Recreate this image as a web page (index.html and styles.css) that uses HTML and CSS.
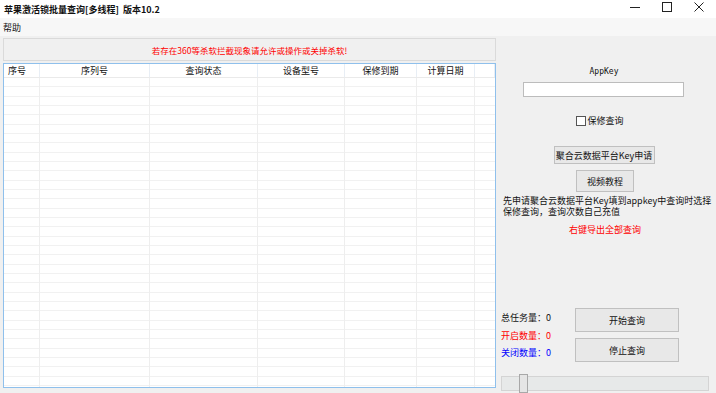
FILE: index.html
```html
<!DOCTYPE html>
<html lang="zh-CN">
<head>
	<meta charset="UTF-8">
	<title>苹果激活锁批量查询</title>
	<link rel="stylesheet" href="styles.css">
</head>
<body>
<div class="window">

	<div class="titlebar">
		<div class="title">苹果激活锁批量查询[多线程]&nbsp;&nbsp;版本10.2</div>
		<div class="controls">
			<span class="ctl"><svg width="10" height="10" viewBox="0 0 10 10"><path d="M0 5.5h10" stroke="#222" stroke-width="1"/></svg></span>
			<span class="ctl"><svg width="10" height="10" viewBox="0 0 10 10"><rect x="0.5" y="0.5" width="9" height="9" fill="none" stroke="#222" stroke-width="1"/></svg></span>
			<span class="ctl"><svg width="10" height="10" viewBox="0 0 10 10"><path d="M0.5 0.5l9 9M9.5 0.5l-9 9" stroke="#222" stroke-width="1"/></svg></span>
		</div>
	</div>

	<div class="menubar"><span class="menu-item">帮助</span></div>

	<div class="main">
		<div class="left">
			<div class="notice">若存在360等杀软拦截现象请允许或操作或关掉杀软!</div>

			<div class="listview">
				<div class="lv-head">
					<div class="lv-col left-text">序号</div>
					<div class="lv-col">序列号</div>
					<div class="lv-col">查询状态</div>
					<div class="lv-col">设备型号</div>
					<div class="lv-col">保修到期</div>
					<div class="lv-col">计算日期</div>
					<div class="lv-col"></div>
				</div>
				<div class="lv-body">
					<div class="lv-line"></div>
					<div class="lv-line"></div>
					<div class="lv-line"></div>
					<div class="lv-line"></div>
					<div class="lv-line"></div>
					<div class="lv-line"></div>
					<div class="lv-line last"></div>
				</div>
			</div>
		</div>

		<div class="right">
			<div class="key-label">AppKey</div>
			<div class="key-input"></div>

			<label class="check"><span class="box"></span>保修查询</label>

			<div class="btn btn-apply">聚合云数据平台Key申请</div>
			<div class="btn btn-video">视频教程</div>

			<p class="hint">先申请聚合云数据平台Key填到appkey中查询时选择<br>保修查询，查询次数自己充值</p>
			<div class="export">右键导出全部查询</div>

			<div class="stats">
				<div class="counts">
					<div class="count">总任务量：0</div>
					<div class="count red">开启数量：0</div>
					<div class="count blue">关闭数量：0</div>
				</div>
				<div class="actions">
					<div class="btn btn-act">开始查询</div>
					<div class="btn btn-act">停止查询</div>
				</div>
			</div>

			<div class="slider"><span class="thumb"></span></div>
		</div>
	</div>

</div>
</body>
</html>
```

FILE: styles.css
```css
html, body {
	margin: 0;
	padding: 0;
}

body {
	width: 716px;
	height: 393px;
	overflow: hidden;
	background: #f0f0f0;
	font-family: "Noto Sans CJK SC", "Liberation Sans", sans-serif;
	font-size: 9px;
	color: #111;
}

.window {
	display: flex;
	flex-direction: column;
	height: 393px;
}

/* title bar */
.titlebar {
	display: flex;
	align-items: center;
	justify-content: space-between;
	height: 18px;
	background: #fff;
}

.title {
	padding-left: 4px;
	font-size: 9px;
	font-weight: bold;
	white-space: nowrap;
}

.controls {
	display: flex;
	padding-right: 1px;
	align-self: flex-start;
	padding-top: 2px;
}

.ctl {
	display: flex;
	justify-content: center;
	align-items: center;
	width: 32px;
	height: 10px;
}

.menubar {
	height: 18px;
	display: flex;
	align-items: center;
	background: #f7f7f7;
}

.menu-item {
	padding-left: 3px;
	padding-top: 1px;
}

/* main area */
.main {
	flex: 1;
	display: flex;
	min-height: 0;
}

.left {
	flex: none;
	width: 493px;
	padding: 2px 0 5px 3px;
	display: flex;
	flex-direction: column;
	gap: 2px;
}

.notice {
	height: 21px;
	border: 1px solid #dadada;
	display: flex;
	justify-content: center;
	align-items: center;
	color: #f00;
	font-size: 8.5px;
	padding-right: 0;
}

.listview {
	flex: 1;
	display: flex;
	flex-direction: column;
	border: 1px solid #8fc0ec;
	background: #fff;
	min-height: 0;
}

.lv-head,
.lv-body {
	display: grid;
	grid-template-columns: 36px 110px 108px 87px 72px 58px 1fr;
}

.lv-head {
	height: 13px;
	border-bottom: 1px solid #eaeaea;
}

.lv-col {
	display: flex;
	align-items: center;
	justify-content: center;
	border-right: 1px solid #e8eef5;
	white-space: nowrap;
}

.lv-col.left-text {
	justify-content: flex-start;
	padding-left: 4px;
}

.lv-body {
	flex: 1;
	background: repeating-linear-gradient(to bottom, transparent 0, transparent 8.33px, #f1f1f1 8.33px, #f1f1f1 9.33px);
}

.lv-line {
	border-right: 1px solid #eeeeee;
}

.lv-line.last {
	border-right: none;
}

/* right panel */
.right {
	flex: 1;
	min-width: 0;
	display: flex;
	flex-direction: column;
	align-items: center;
	padding-top: 31px;
}

.key-label {
	font-family: "DejaVu Sans Mono", monospace;
	font-size: 8px;
	margin-left: -4px;
}

.key-input {
	width: 159px;
	height: 13px;
	margin-top: 6px;
	margin-left: -5px;
	background: #fff;
	border: 1px solid #bcbcbc;
}

.check {
	display: flex;
	align-items: center;
	gap: 1px;
	margin-top: 17px;
	margin-left: -12px;
}

.check .box {
	width: 8px;
	height: 8px;
	border: 1px solid #555;
	background: #fff;
}

.btn {
	display: flex;
	justify-content: center;
	align-items: center;
	background: #e8e8e8;
	border: 1px solid #c0c0c0;
	white-space: nowrap;
}

.btn-apply {
	width: 99px;
	height: 16px;
	margin-top: 19px;
	margin-left: -4px;
}

.btn-video {
	width: 56px;
	height: 20px;
	margin-top: 6px;
	margin-left: -2px;
}

.hint {
	align-self: flex-start;
	white-space: nowrap;
	margin: 3px 0 0 7px;
	line-height: 11px;
}

.export {
	color: #f00;
	margin-top: 6px;
	margin-left: -2px;
}

.stats {
	align-self: stretch;
	display: flex;
	align-items: center;
	gap: 24px;
	margin-top: 72px;
	padding-left: 5px;
}

.counts {
	display: flex;
	flex-direction: column;
	gap: 6.5px;
}

.count {
	line-height: 11px;
}

.count.red { color: #f00; }
.count.blue { color: #00f; }

.actions {
	display: flex;
	flex-direction: column;
	gap: 6px;
}

.btn-act {
	width: 102px;
	height: 22px;
}

.slider {
	align-self: stretch;
	position: relative;
	height: 13px;
	margin: 14px 7px 0 5px;
	background: #e7e9e9;
	border: 1px solid #d4d4d4;
}

.slider .thumb {
	position: absolute;
	left: 17px;
	top: -3px;
	width: 7px;
	height: 17px;
	background: #e5e5e5;
	border: 1px solid #a8a8a8;
}
```
